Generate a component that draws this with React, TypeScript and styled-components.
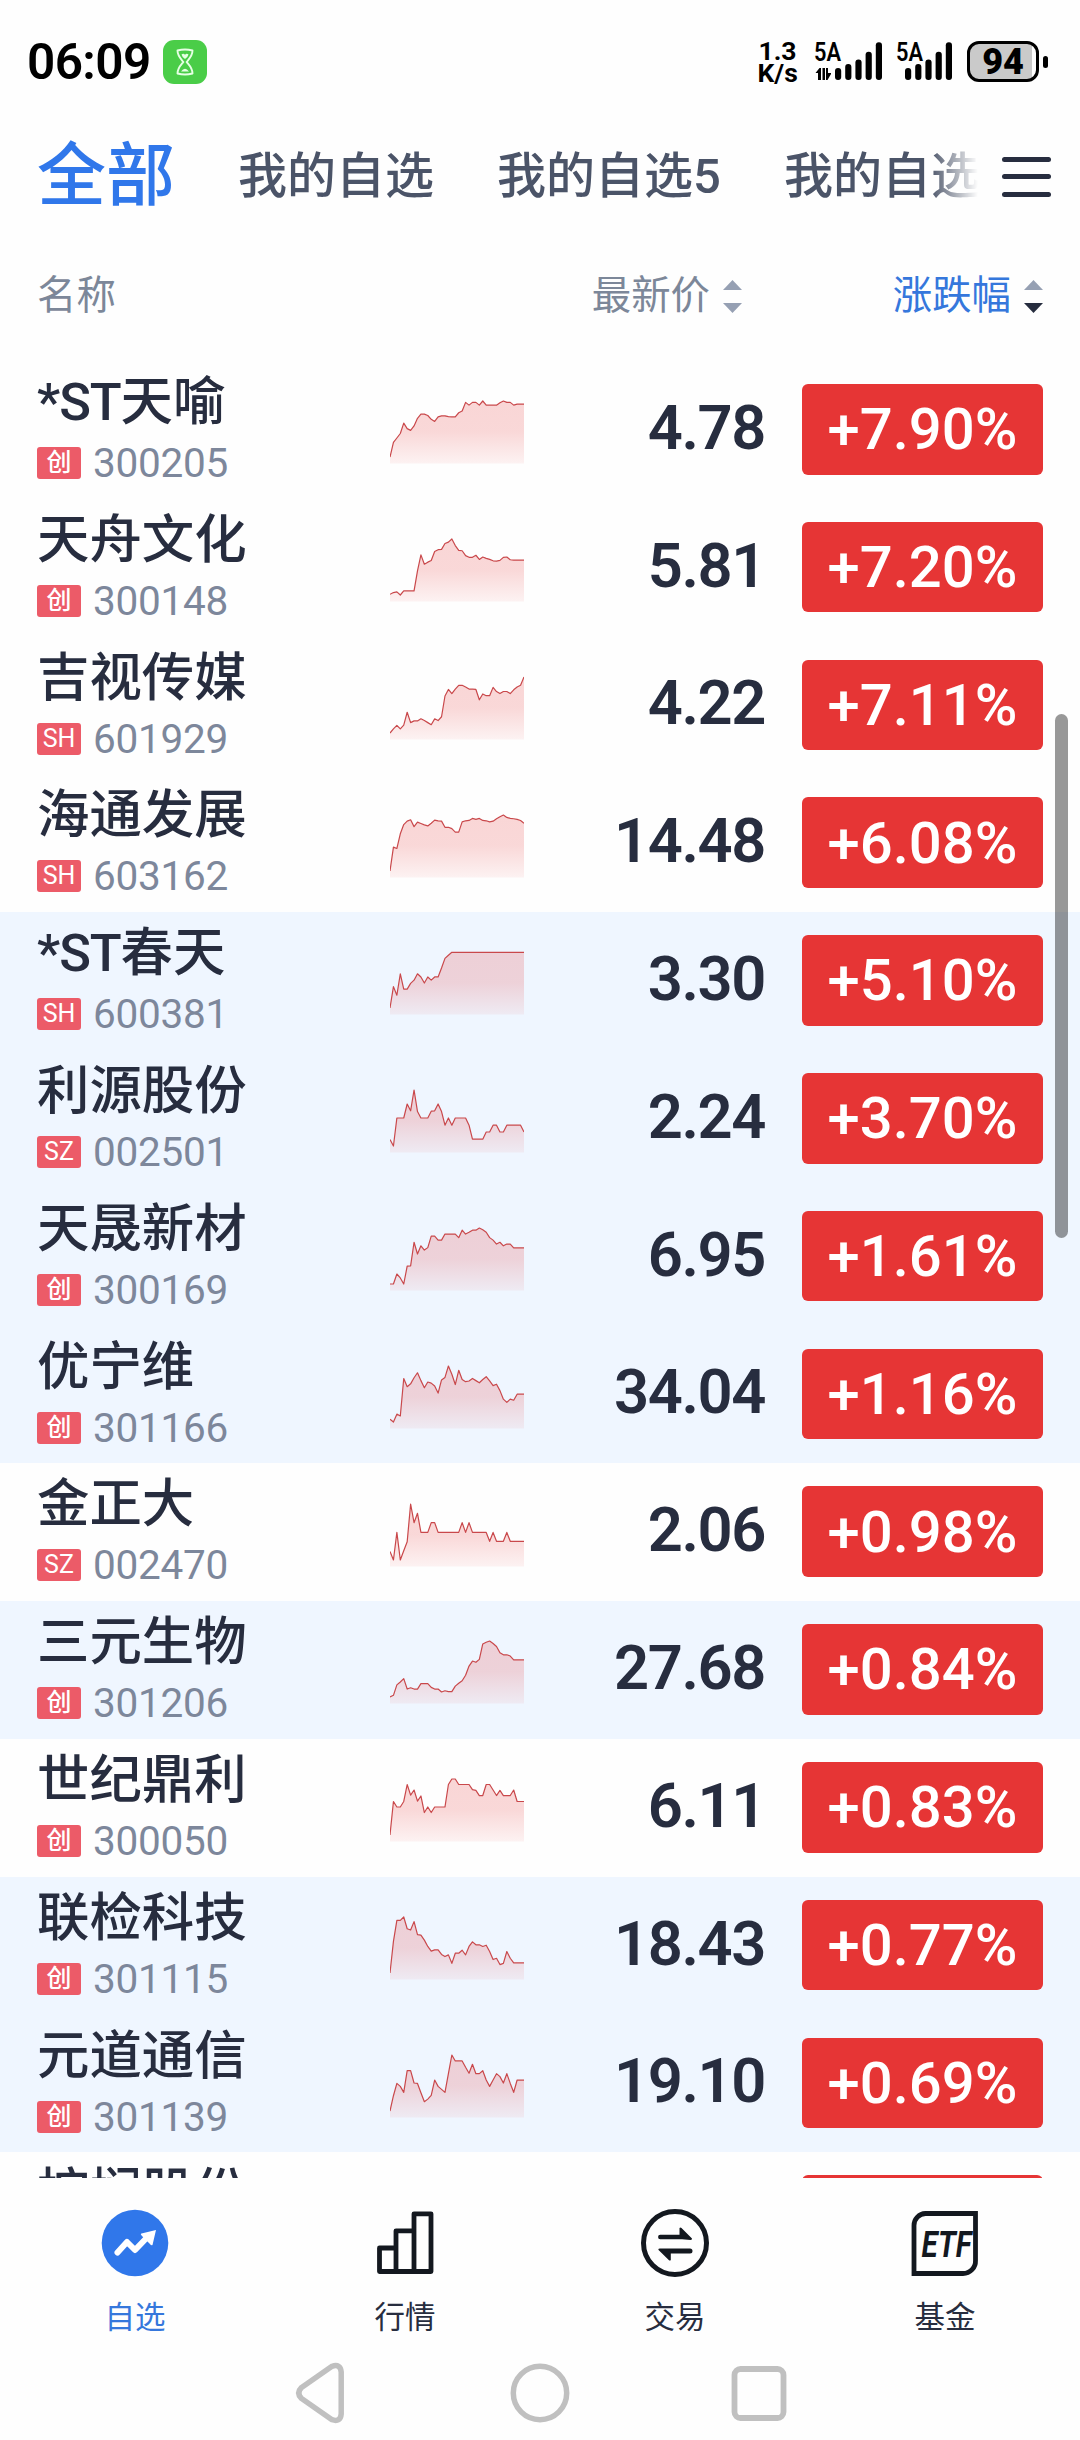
import React from "react";
import styled, { createGlobalStyle } from "styled-components";

const GlobalStyle = createGlobalStyle`
  * { box-sizing: border-box; }
  body { margin: 0; background: #fefefe; }
`;

const Screen = styled.div`
  width: 1080px;
  height: 2440px;
  display: flex;
  flex-direction: column;
  overflow: hidden;
  background: #fefefe;
  color: #272d3f;
  font-family: Roboto, "Noto Sans CJK SC", sans-serif;
`;

/* ---------- status bar ---------- */

const StatusBar = styled.header`
  height: 122px;
  flex: none;
  padding: 1px 32px 0 27px;
  display: flex;
  align-items: center;
  justify-content: space-between;
  color: #000;
`;
const StatusGroup = styled.div`
  display: flex;
  align-items: center;
`;
const Clock = styled.span`
  width: 123px;
  font-size: 49.5px;
  line-height: 60px;
  font-weight: 600;
  letter-spacing: -0.6px;
  white-space: nowrap;
`;
const TimerBadge = styled.span`
  width: 44px;
  height: 44px;
  margin-left: 13px;
  display: flex;
  align-items: center;
  justify-content: center;
  border-radius: 11px;
  background: #4acd48;
`;
const NetSpeed = styled.div`
  width: 40px;
  margin-right: 16px;
  text-align: center;
  font-size: 26.5px;
  line-height: 22px;
  font-weight: 700;
  white-space: nowrap;
`;
const Signal = styled.svg<{ $gap: number }>`
  display: block;
  height: 44px;
  margin-right: ${(p) => p.$gap}px;
  overflow: visible;
  font-family: Roboto, sans-serif;
  font-weight: 600;
`;
const Battery = styled.div`
  width: 72px;
  height: 41px;
  display: flex;
  align-items: center;
  justify-content: center;
  border: 3px solid #000;
  border-radius: 12px;
  background: linear-gradient(to right, #cacaca 62px, #fff 62px);
  font-size: 36px;
  line-height: 36px;
  font-weight: 900;
`;
const BatteryNub = styled.span`
  width: 5px;
  height: 12px;
  margin-left: 4px;
  border-radius: 3px;
  background: #000;
`;

/* ---------- group tabs ---------- */

const GroupBar = styled.nav`
  height: 106px;
  flex: none;
  padding: 3px 0 0 37px;
  display: flex;
  align-items: center;
`;
const GroupTabs = styled.div`
  width: 944px;
  height: 103px;
  display: flex;
  align-items: center;
  gap: 63px;
  overflow: hidden;
  mask-image: linear-gradient(to right, #000 893px, transparent 941px);
`;
const GroupTab = styled.span<{ $active?: boolean }>`
  flex: none;
  font-size: ${(p) => (p.$active ? 69 : 49)}px;
  line-height: 100px;
  font-weight: 500;
  color: ${(p) => (p.$active ? "#3077ea" : "#4b5468")};
`;
const MenuIcon = styled.span`
  width: 49px;
  margin-left: 21px;
  display: flex;
  flex-direction: column;
  gap: 12.5px;
`;
const MenuLine = styled.i`
  height: 5px;
  border-radius: 2.5px;
  background: #272d3f;
`;

/* ---------- column headings ---------- */

const Columns = styled.div`
  height: 132.8px;
  flex: none;
  padding: 4px 37px 0;
  display: grid;
  grid-template-columns: 1fr auto auto;
  align-items: center;
`;
const Heading = styled.div<{ $active?: boolean; $width?: number }>`
  width: ${(p) => (p.$width ? `${p.$width}px` : "auto")};
  display: flex;
  align-items: center;
  justify-content: flex-end;
  gap: 13px;
  font-size: 39.4px;
  line-height: 58px;
  color: ${(p) => (p.$active ? "#3577dc" : "#7c8799")};
`;
const HeadingName = styled(Heading)`
  justify-content: flex-start;
`;
const SortMark = styled.span`
  display: flex;
  flex-direction: column;
  gap: 13px;
`;
const Arrow = styled.i<{ $down?: boolean; $dark?: boolean }>`
  width: 19px;
  height: 10px;
  background: ${(p) => (p.$dark ? "#272d3f" : "#96a0b3")};
  clip-path: ${(p) => (p.$down ? "polygon(0 0, 100% 0, 50% 100%)" : "polygon(50% 0, 100% 100%, 0 100%)")};
`;

/* ---------- quotes ---------- */

const Viewport = styled.main`
  position: relative;
  height: 1817.2px;
  flex: none;
  overflow: hidden;
`;
const Row = styled.div<{ $tinted?: boolean }>`
  height: 137.8px;
  padding: 0 37px;
  display: grid;
  grid-template-columns: 353px 134px 241px 37px 241px;
  background: ${(p) => (p.$tinted ? "#eff6ff" : "transparent")};
`;
const Security = styled.div`
  display: flex;
  flex-direction: column;
`;
const Name = styled.div`
  height: 60px;
  margin-top: 11.2px;
  font-size: 52.4px;
  line-height: 60px;
  font-weight: 500;
  white-space: nowrap;
`;
const Prefix = styled.span`
  letter-spacing: -1.1px;
`;
const Meta = styled.div`
  height: 40px;
  margin-top: 11px;
  display: flex;
  align-items: center;
  gap: 12px;
`;
const Market = styled.span`
  width: 44px;
  height: 32px;
  display: flex;
  align-items: center;
  justify-content: center;
  border-radius: 3px;
  background: #ec5b68;
  color: #fff;
  font-size: 25px;
  line-height: 32px;
  font-weight: 450;
`;
const Code = styled.span`
  font-size: 40.5px;
  line-height: 40px;
  letter-spacing: -0.25px;
  color: #7d879b;
`;
const Spark = styled.svg`
  display: block;
  width: 134px;
  height: 64px;
  margin-top: 39.4px;
`;
const Price = styled.div`
  margin-top: 27px;
  text-align: right;
  font-size: 61.5px;
  line-height: 80px;
  font-weight: 600;
  letter-spacing: -1.4px;
`;
const Change = styled.div`
  grid-column: 5;
  height: 90.6px;
  margin-top: 23.2px;
  display: flex;
  align-items: center;
  justify-content: center;
  border-radius: 6px;
  background: #e63535;
  color: #fff;
  font-size: 58px;
  line-height: 88px;
  font-weight: 550;
`;
const ScrollThumb = styled.div`
  position: absolute;
  top: 353px;
  right: 12px;
  width: 13px;
  height: 524px;
  border-radius: 7px;
  background: rgba(0, 0, 0, 0.4);
`;

/* ---------- bottom bars ---------- */

const TabBar = styled.nav`
  height: 162px;
  flex: none;
  display: grid;
  grid-template-columns: repeat(4, 1fr);
`;
const Tab = styled.div<{ $active?: boolean }>`
  padding-top: 29px;
  display: flex;
  flex-direction: column;
  align-items: center;
  gap: 16px;
  font-size: 30.5px;
  line-height: 46px;
  color: ${(p) => (p.$active ? "#3577dc" : "#272d3f")};
`;
const SystemBar = styled.footer`
  height: 100px;
  flex: none;
  display: flex;
  justify-content: center;
  gap: 161px;
  padding: 20px 4px 0 0;
`;

type Quote = {
  name: string;
  market: string;
  code: string;
  price: string;
  change: string;
  tinted?: boolean;
  drops: number[];
};

const repeat = (value: number, count: number) => Array<number>(count).fill(value);

/* `drops`: distance of each sample below the day's high */
const quotes: Quote[] = [
  { name: "*ST天喻", market: "创", code: "300205", price: "4.78", change: "+7.90%",
    drops: [162, 120, 107, 94, 64, 80, 85, 72, 50, 38, 38, 42, 53, 59, 46, 43, 43, 45, 46, 46, 34, 29, 4, 12, 4, 4, 12, 0, 12, 12, 12, 12, 5, 0, 4, 4, 12, 9, 9, 9] },
  { name: "天舟文化", market: "创", code: "300148", price: "5.81", change: "+7.20%",
    drops: [160, 155, 153, 162, 150, 150, 150, 150, 92, 46, 73, 67, 62, 36, 31, 30, 13, 9, 0, 19, 33, 34, 48, 53, 53, 47, 59, 52, 56, 59, 63, 64, 62, 53, 52, 60, 61, 61, 61, 61] },
  { name: "吉视传媒", market: "SH", code: "601929", price: "4.22", change: "+7.11%",
    drops: [162, 150, 140, 150, 139, 102, 132, 127, 127, 121, 126, 132, 138, 121, 126, 115, 55, 36, 48, 35, 24, 24, 29, 35, 35, 36, 66, 49, 54, 54, 30, 42, 48, 42, 42, 48, 37, 29, 24, 0] },
  { name: "海通发展", market: "SH", code: "603162", price: "14.48", change: "+6.08%",
    drops: [164, 94, 98, 55, 28, 18, 14, 34, 21, 25, 29, 32, 24, 15, 17, 18, 36, 36, 40, 50, 50, 20, 17, 16, 10, 13, 10, 16, 17, 20, 18, 11, 5, 0, 7, 10, 11, 13, 16, 24] },
  { name: "*ST春天", market: "SH", code: "600381", price: "3.30", change: "+5.10%", tinted: true,
    drops: [157, 97, 121, 61, 104, 104, 88, 79, 61, 70, 87, 70, 79, 70, 70, 45, 18, 9, ...repeat(0.8, 22)] },
  { name: "利源股份", market: "SZ", code: "002501", price: "2.24", change: "+3.70%", tinted: true,
    drops: [138, 156, 78, 78, 78, 39, 58, 0, 60, 78, 78, 78, 59, 58, 39, 60, 98, 78, 98, 78, 78, 78, 78, 98, 137, 137, 137, 137, 117, 117, 98, 98, 117, 117, 98, 98, 98, 98, 98, 117] },
  { name: "天晟新材", market: "创", code: "300169", price: "6.95", change: "+1.61%", tinted: true,
    drops: [157, 157, 129, 140, 157, 107, 106, 40, 73, 50, 62, 55, 23, 23, 34, 34, 17, 17, 17, 17, 27, 6, 17, 12, 6, 6, 0, 5, 12, 27, 34, 45, 40, 50, 45, 45, 56, 56, 56, 56] },
  { name: "优宁维", market: "创", code: "301166", price: "34.04", change: "+1.16%", tinted: true,
    drops: [149, 157, 135, 140, 35, 58, 50, 33, 19, 41, 61, 45, 48, 56, 76, 39, 32, 0, 23, 52, 12, 38, 44, 42, 35, 41, 47, 38, 30, 42, 55, 51, 69, 93, 102, 93, 96, 79, 79, 79] },
  { name: "金正大", market: "SZ", code: "002470", price: "2.06", change: "+0.98%",
    drops: [112, 132, 67, 132, 110, 89, 0, 44, 22, 67, 67, 67, 44, 44, ...repeat(67, 7), 44, 67, 44, ...repeat(67, 5), 88, 67, 88, 88, 88, 67, ...repeat(88, 5)] },
  { name: "三元生物", market: "创", code: "301206", price: "27.68", change: "+0.84%", tinted: true,
    drops: [134, 130, 105, 98, 90, 115, 112, 115, 115, 102, 102, 102, 111, 115, 115, 122, 119, 121, 121, 108, 101, 95, 82, 60, 48, 51, 44, 7, 3, 0, 6, 13, 28, 33, 33, 36, 45, 45, 45, 45] },
  { name: "世纪鼎利", market: "创", code: "300050", price: "6.11", change: "+0.83%",
    drops: [132, 53, 66, 66, 53, 13, 38, 26, 52, 40, 79, 66, 79, 66, 66, 66, 66, 13, 0, 0, 13, 13, 13, 13, 25, 27, 39, 39, 13, 13, 26, 39, 27, 39, 39, 39, 26, 53, 53, 53] },
  { name: "联检科技", market: "创", code: "301115", price: "18.43", change: "+0.77%", tinted: true,
    drops: [133, 58, 8, 8, 0, 28, 31, 11, 42, 43, 55, 70, 81, 78, 78, 89, 94, 90, 110, 86, 86, 79, 90, 70, 59, 66, 66, 70, 67, 82, 101, 98, 113, 110, 82, 98, 109, 109, 109, 109] },
  { name: "元道通信", market: "创", code: "301139", price: "19.10", change: "+0.69%", tinted: true,
    drops: [132, 96, 67, 74, 88, 37, 37, 66, 67, 89, 110, 104, 95, 59, 74, 81, 88, 44, 0, 14, 14, 14, 29, 43, 22, 44, 44, 37, 59, 74, 59, 44, 51, 66, 44, 67, 88, 59, 59, 59] },
  { name: "棕榈股份", market: "SZ", code: "002431", price: "2.98", change: "+0.68%",
    drops: [120, 90, 60, 70, 40, ...repeat(50, 35)] },
];

const CHART_BASE = 63.4;

function Sparkline({ id, drops }: { id: string; drops: number[] }) {
  const deepest = Math.max(...drops);
  const step = 134 / (drops.length - 1);
  const points = drops
    .map((d, i) => `${(i * step).toFixed(2)},${(1 + (d / deepest) * 56).toFixed(2)}`)
    .join(" L");
  return (
    <Spark viewBox="0 0 134 64">
      <defs>
        <linearGradient id={id} gradientUnits="userSpaceOnUse" x1="0" y1="0" x2="0" y2={CHART_BASE}>
          <stop offset="0" stopColor="#e63535" stopOpacity="0.2" />
          <stop offset="0.5" stopColor="#e63535" stopOpacity="0.19" />
          <stop offset="1" stopColor="#e63535" stopOpacity="0.06" />
        </linearGradient>
      </defs>
      <path d={`M${points} V${CHART_BASE} H0 Z`} fill={`url(#${id})`} />
      <path d={`M${points}`} fill="none" stroke="#c9484b" strokeWidth="1.2" strokeLinejoin="round" />
    </Spark>
  );
}

function QuoteRow({ quote }: { quote: Quote }) {
  const special = quote.name.startsWith("*ST");
  return (
    <Row $tinted={quote.tinted}>
      <Security>
        <Name>
          {special && <Prefix>*ST</Prefix>}
          {special ? quote.name.slice(3) : quote.name}
        </Name>
        <Meta>
          <Market>{quote.market}</Market>
          <Code>{quote.code}</Code>
        </Meta>
      </Security>
      <Sparkline id={`fill-${quote.code}`} drops={quote.drops} />
      <Price>{quote.price}</Price>
      <Change>{quote.change}</Change>
    </Row>
  );
}

function Hourglass() {
  return (
    <svg width="18" height="28" viewBox="0 0 18 28" fill="none" stroke="#e6ffe4" strokeWidth="1.9" strokeLinejoin="round">
      <path d="M1.5 2.5Q9 0.5 16.5 2.5C16.5 8 13 11 10.6 14C13 17 16.5 20 16.5 25.5Q9 27.5 1.5 25.5C1.5 20 5 17 7.4 14C5 11 1.5 8 1.5 2.5Z" />
      <path d="M5.5 6.5Q7.5 5 9 6.8Q10.5 5 12.5 6.5Q12 9 9 11Q6 9 5.5 6.5Z M5 23.5Q9 18 13 23.5Z" fill="#e6ffe4" stroke="none" />
    </svg>
  );
}

function SignalIcon({ data, gap }: { data?: boolean; gap: number }) {
  const start = data ? 21 : 9;
  const tops = [28, 24, 19.5, 11.7, 2.3];
  return (
    <Signal $gap={gap} width={data ? 70 : 58} viewBox={`0 0 ${data ? 70 : 58} 44`}>
      <text x="0" y="20.5" fontSize="25.5" textLength="27" lengthAdjust="spacingAndGlyphs">5A</text>
      {tops.map((top, i) => (
        <rect key={top} x={start + i * 10.2} y={top} width="6.2" height={40 - top} rx="3" />
      ))}
      {data && <path d="M1.5 33L5.5 28H7V40H4V33Z M8.5 28H11V40H8.5Z M12 28H14V33H17V34L13.5 40H12Z" />}
    </Signal>
  );
}

function WatchIcon() {
  return (
    <svg width="72" height="72" viewBox="0 0 72 72">
      <circle cx="36" cy="36" r="33.3" fill="#3077ea" />
      <path d="M18.5 45.5L28 35L36 43L48.5 30" fill="none" stroke="#fff" strokeWidth="6" strokeLinecap="round" strokeLinejoin="round" />
      <path d="M42.5 26.5L57 23L53.5 38Q52 39 50.5 36.5L43 29Q41 27 42.5 26.5Z" fill="#fff" />
    </svg>
  );
}

function MarketIcon() {
  return (
    <svg width="72" height="72" viewBox="0 0 72 72" fill="none" stroke="#13181f" strokeWidth="4.8" strokeLinejoin="round">
      <path d="M10.5 41H27V64.5H10.5Z M27 23.8H45V64.5H27Z M45 6.8H62V64.5H45Z" />
    </svg>
  );
}

function TradeIcon() {
  return (
    <svg width="72" height="72" viewBox="0 0 72 72">
      <circle cx="36" cy="36" r="31.5" fill="none" stroke="#13181f" strokeWidth="5" />
      <path d="M21.3 27.8H40.5V21Q41.5 20 42.5 21L53 31.5Q53 33 51.5 33L43 32.3H21.3A2.25 2.25 0 0 1 21.3 27.8Z" fill="#13181f" />
      <path d="M51 46.4H31.8V53Q31 54 30 53.2L19.3 42.7Q19.3 41.4 21 41.4H51A2.5 2.5 0 0 1 51 46.4Z" fill="#13181f" />
    </svg>
  );
}

const FundText = styled.text`
  font-family: Roboto, sans-serif;
  font-size: 37.5px;
  font-weight: 700;
  font-style: italic;
`;

function FundIcon() {
  return (
    <svg width="72" height="72" viewBox="0 0 72 72">
      <path d="M16.5 6.5H66.5V53.5A12.5 12.5 0 0 1 54 66.5H5V18.5A12 12 0 0 1 16.5 6.5Z" fill="none" stroke="#13181f" strokeWidth="4.8" />
      <FundText x="12.5" y="50" fill="#13181f" textLength="50" lengthAdjust="spacingAndGlyphs">ETF</FundText>
    </svg>
  );
}

export default function App() {
  return (
    <Screen>
      <GlobalStyle />
      <StatusBar>
        <StatusGroup>
          <Clock>06:09</Clock>
          <TimerBadge><Hourglass /></TimerBadge>
        </StatusGroup>
        <StatusGroup>
          <NetSpeed>
            <div>1.3</div>
            <div>K/s</div>
          </NetSpeed>
          <SignalIcon data gap={12.5} />
          <SignalIcon gap={13} />
          <Battery>94</Battery>
          <BatteryNub />
        </StatusGroup>
      </StatusBar>

      <GroupBar>
        <GroupTabs>
          <GroupTab $active>全部</GroupTab>
          <GroupTab>我的自选</GroupTab>
          <GroupTab>我的自选5</GroupTab>
          <GroupTab>我的自选3</GroupTab>
        </GroupTabs>
        <MenuIcon>
          <MenuLine />
          <MenuLine />
          <MenuLine />
        </MenuIcon>
      </GroupBar>

      <Columns>
        <HeadingName>名称</HeadingName>
        <Heading>
          最新价
          <SortMark><Arrow /><Arrow $down /></SortMark>
        </Heading>
        <Heading $active $width={301}>
          涨跌幅
          <SortMark><Arrow /><Arrow $down $dark /></SortMark>
        </Heading>
      </Columns>

      <Viewport>
        {quotes.map((quote) => (
          <QuoteRow key={quote.code} quote={quote} />
        ))}
        <ScrollThumb />
      </Viewport>

      <TabBar>
        <Tab $active><WatchIcon />自选</Tab>
        <Tab><MarketIcon />行情</Tab>
        <Tab><TradeIcon />交易</Tab>
        <Tab><FundIcon />基金</Tab>
      </TabBar>

      <SystemBar>
        <svg width="60" height="66" viewBox="0 0 60 66" fill="none" stroke="#c0c0c0" strokeWidth="5.5">
          <path d="M43 6.3L12.5 27.5Q7 33 12.5 38.5L43 59.7Q51.5 62.5 52.2 54V12Q51.5 3.5 43 6.3Z" />
        </svg>
        <svg width="60" height="66" viewBox="0 0 60 66" fill="none" stroke="#c0c0c0" strokeWidth="5.5">
          <circle cx="30" cy="33" r="26.7" />
        </svg>
        <svg width="56" height="66" viewBox="0 0 56 66" fill="none" stroke="#c0c0c0" strokeWidth="5.8">
          <rect x="3.5" y="9" width="49" height="49" rx="6" />
        </svg>
      </SystemBar>
    </Screen>
  );
}
